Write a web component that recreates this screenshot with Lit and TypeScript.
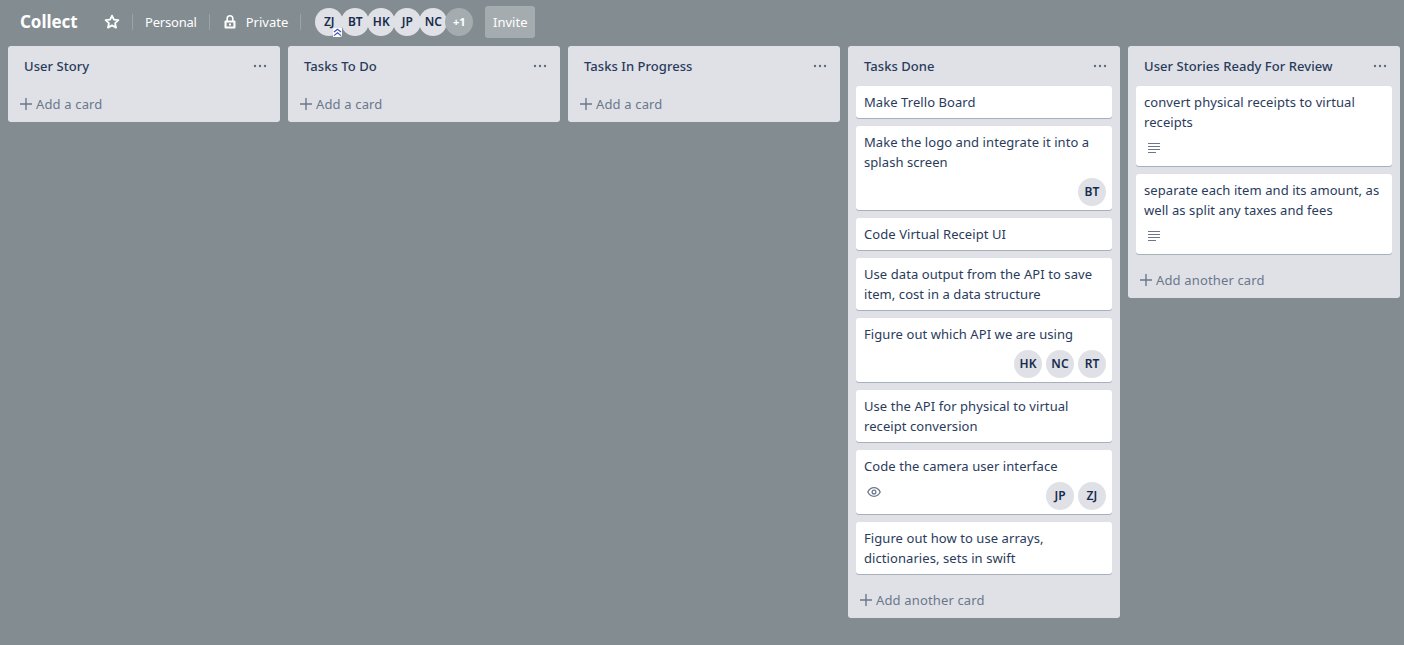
import { LitElement, css, html, nothing } from 'lit';
import { customElement } from 'lit/decorators.js';

interface Card {
   text: string;
   desc?: boolean;
   watch?: boolean;
   members?: string[];
}

interface List {
   title: string;
   cards: Card[];
}

const LISTS: List[] = [
   { title: 'User Story', cards: [] },
   { title: 'Tasks To Do', cards: [] },
   { title: 'Tasks In Progress', cards: [] },
   {
      title: 'Tasks Done',
      cards: [
         { text: 'Make Trello Board' },
         { text: 'Make the logo and integrate it into a splash screen', members: ['BT'] },
         { text: 'Code Virtual Receipt UI' },
         { text: 'Use data output from the API to save item, cost in a data structure' },
         { text: 'Figure out which API we are using', members: ['HK', 'NC', 'RT'] },
         { text: 'Use the API for physical to virtual receipt conversion' },
         { text: 'Code the camera user interface', watch: true, members: ['JP', 'ZJ'] },
         { text: 'Figure out how to use arrays, dictionaries, sets in swift' },
      ],
   },
   {
      title: 'User Stories Ready For Review',
      cards: [
         { text: 'convert physical receipts to virtual receipts', desc: true },
         { text: 'separate each item and its amount, as well as split any taxes and fees', desc: true },
      ],
   },
];

const BOARD_MEMBERS = ['ZJ', 'BT', 'HK', 'JP', 'NC'];

@customElement('app-root')
export class AppRoot extends LitElement {
   static styles = css`
      :host {
         display: block;
         height: 645px;
         overflow: hidden;
         background: #838c91;
         font-family: 'Noto Sans', 'Open Sans', sans-serif;
         font-size: 13px;
         line-height: 20px;
         color: #2a3b5c;
      }

      .header {
         display: flex;
         align-items: center;
         height: 46px;
         box-sizing: border-box;
         padding: 0 0 2px 20px;
         color: #fff;
      }

      .board-name {
         font-size: 17px;
         font-weight: 700;
         letter-spacing: -0.05px;
         width: 84px;
      }

      .star {
         display: block;
         width: 16px;
         height: 16px;
      }

      .sep {
         width: 1px;
         height: 16px;
         margin: 0 12px;
         background: rgba(255, 255, 255, 0.2);
      }

      .head-text {
         font-size: 13px;
         letter-spacing: -0.2px;
      }

      .lock {
         display: block;
         width: 12px;
         height: 14px;
         margin-left: 2px;
      }

      .private {
         margin-left: 10px;
         letter-spacing: 0;
      }

      .members {
         display: flex;
         margin-left: 2px;
      }

      .members .avatar {
         margin-right: -2px;
         position: relative;
      }

      .chevrons {
         position: absolute;
         right: 1px;
         bottom: -1px;
         width: 9px;
         height: 9px;
         background: #fff;
         border-radius: 2px 0 2px 0;
      }

      .avatar {
         flex: none;
         width: 28px;
         height: 28px;
         border-radius: 50%;
         background: #dfe1e6;
         color: #172b4d;
         font-size: 12px;
         font-weight: 600;
         line-height: 28px;
         text-align: center;
      }

      .avatar.more {
         background: #a5acb0;
         color: #fff;
         font-size: 11px;
         font-weight: 700;
      }

      .invite {
         width: 50px;
         height: 32px;
         margin-left: 14px;
         border-radius: 3px;
         background: #a5acb0;
         color: #fff;
         font-size: 13px;
         line-height: 32px;
         text-align: center;
      }

      .board {
         display: flex;
         align-items: flex-start;
         gap: 8px;
         padding-left: 8px;
      }

      .list {
         flex: none;
         width: 272px;
         border-radius: 3px;
         background: #dfe1e6;
      }

      .list-head {
         display: flex;
         align-items: center;
         justify-content: space-between;
         height: 40px;
         padding: 0 13px 0 16px;
         font-weight: 500;
         font-size: 13px;
         letter-spacing: 0.05px;
      }

      .dots {
         display: block;
         width: 14px;
         height: 4px;
      }

      .cards {
         display: flex;
         flex-direction: column;
         gap: 8px;
         padding: 0 8px 8px;
      }

      .card {
         border-radius: 3px;
         background: #fff;
         box-shadow: 0 1px 0 rgba(9, 30, 66, 0.25);
         padding: 6px 8px;
         letter-spacing: 0.07px;
      }

      .card.with-members {
         padding-bottom: 4px;
      }

      .card-foot {
         display: flex;
         justify-content: space-between;
         align-items: flex-start;
      }

      .card-foot.right {
         justify-content: flex-end;
      }

      .card-foot.members-row {
         margin-top: 6px;
      }

      .card-foot.short {
         height: 28px;
      }

      .desc-icon {
         display: block;
         margin: 11px 0 0 4px;
      }

      .watch-icon {
         display: block;
         margin: 4px 0 0 3px;
      }

      .card-members {
         display: flex;
         gap: 4px;
         margin-right: -2px;
      }

      .add {
         display: flex;
         align-items: center;
         gap: 4px;
         height: 36px;
         padding-left: 12px;
         color: #6b778c;
         letter-spacing: 0.15px;
      }

      .plus {
         display: block;
         width: 12px;
         height: 12px;
      }
   `;

   renderCard(card: Card) {
      const members = card.members ?? [];
      const hasMembers = members.length > 0;
      return html`<div class="card ${hasMembers ? 'with-members' : ''}">
         ${card.text}
         ${card.desc
            ? html`<div class="card-foot short">
                 <svg class="desc-icon" width="12" height="10" viewBox="0 0 12 10">
                    <path d="M0 .5h12M0 3.5h12M0 6.5h12M0 9.5h8" stroke="#6b778c" fill="none" />
                 </svg>
              </div>`
            : nothing}
         ${hasMembers
            ? html`<div class="card-foot members-row ${card.watch ? '' : 'right'}">
                 ${card.watch
                    ? html`<svg class="watch-icon" width="14" height="12" viewBox="0 0 14 12">
                         <path
                            d="M.8 6C2.2 3.2 4.4 1.7 7 1.7s4.8 1.5 6.2 4.3C11.8 8.8 9.6 10.3 7 10.3S2.2 8.8.8 6z"
                            stroke="#6b778c"
                            stroke-width="1.3"
                            fill="none"
                         />
                         <circle cx="7" cy="6" r="1.9" stroke="#6b778c" stroke-width="1.3" fill="none" />
                      </svg>`
                    : nothing}
                 <div class="card-members">
                    ${members.map((m) => html`<div class="avatar">${m}</div>`)}
                 </div>
              </div>`
            : nothing}
      </div>`;
   }

   renderList(list: List) {
      return html`<div class="list">
         <div class="list-head">
            <span>${list.title}</span>
            <svg class="dots" viewBox="0 0 14 4">
               <circle cx="2" cy="2" r="1.2" fill="#5e6c84" />
               <circle cx="7" cy="2" r="1.2" fill="#5e6c84" />
               <circle cx="12" cy="2" r="1.2" fill="#5e6c84" />
            </svg>
         </div>
         ${list.cards.length
            ? html`<div class="cards">${list.cards.map((c) => this.renderCard(c))}</div>`
            : nothing}
         <div class="add">
            <svg class="plus" viewBox="0 0 12 12">
               <path d="M6 0v12M0 6h12" stroke="#6b778c" stroke-width="1.4" />
            </svg>
            <span>${list.cards.length ? 'Add another card' : 'Add a card'}</span>
         </div>
      </div>`;
   }

   render() {
      return html`
         <div class="header">
            <div class="board-name">Collect</div>
            <svg class="star" viewBox="0 0 16 16">
               <path
                  d="M8 1.6l1.9 4.1 4.5.5-3.3 3 .9 4.4L8 11.4l-4 2.2.9-4.4-3.3-3 4.5-.5z"
                  fill="none"
                  stroke="#fff"
                  stroke-width="1.8"
                  stroke-linejoin="round"
               />
            </svg>
            <div class="sep"></div>
            <div class="head-text">Personal</div>
            <div class="sep"></div>
            <svg class="lock" viewBox="0 0 12 14">
               <path d="M3.2 6V3.6a2.8 2.8 0 015.6 0V6" fill="none" stroke="#fff" stroke-width="1.6" />
               <path
                  fill="#fff"
                  fill-rule="evenodd"
                  d="M1.5 5.5h9a1 1 0 011 1v6a1 1 0 01-1 1h-9a1 1 0 01-1-1v-6a1 1 0 011-1zM2.6 7.6v3.8h6.8V7.6z"
               />
               <rect x="5" y="8.5" width="2" height="2" fill="#fff" />
            </svg>
            <div class="head-text private">Private</div>
            <div class="sep"></div>
            <div class="members">
               ${BOARD_MEMBERS.map(
                  (m, i) => html`<div class="avatar">
                     ${m}
                     ${i === 0
                        ? html`<svg class="chevrons" viewBox="0 0 9 9">
                             <path
                                d="M1 4L4.5 1.2 8 4M1 7.6L4.5 4.8 8 7.6"
                                fill="none"
                                stroke="#3f4fc0"
                                stroke-width="1.2"
                             />
                          </svg>`
                        : nothing}
                  </div>`
               )}
               <div class="avatar more">+1</div>
            </div>
            <div class="invite">Invite</div>
         </div>
         <div class="board">${LISTS.map((l) => this.renderList(l))}</div>
      `;
   }
}
